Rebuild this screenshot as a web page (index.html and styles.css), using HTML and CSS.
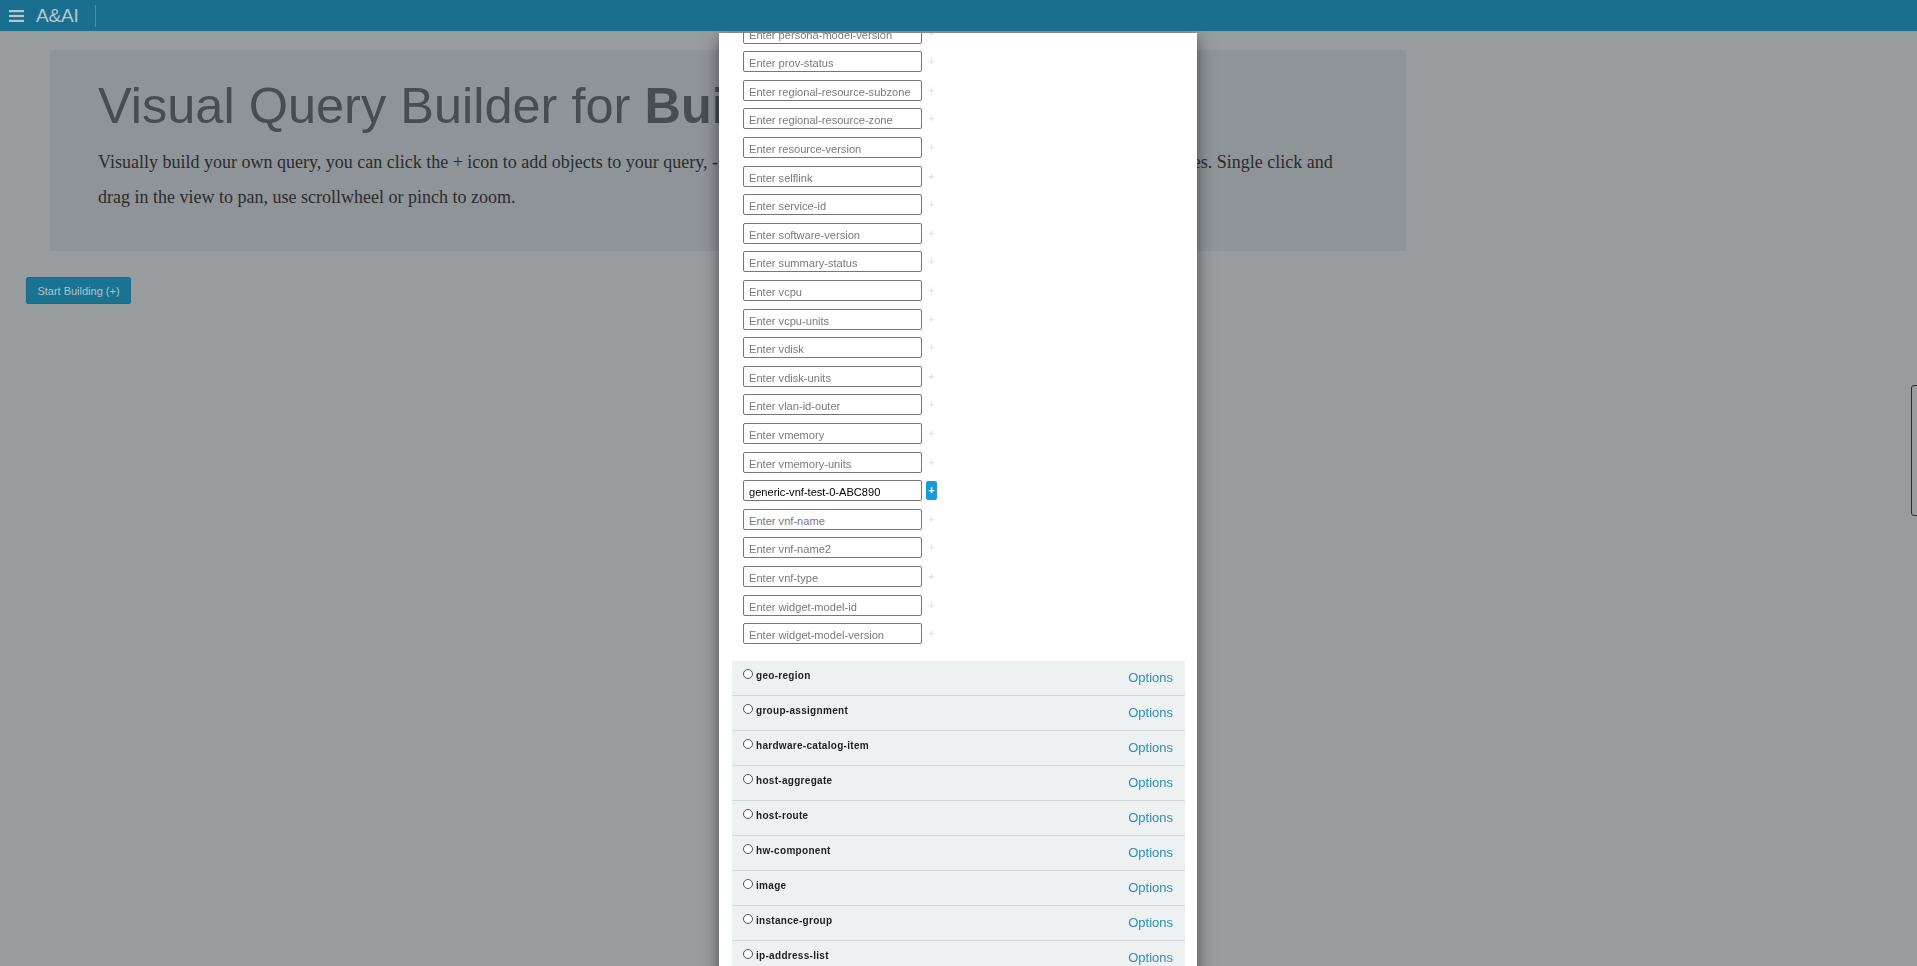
FILE: index.html
```html
<!DOCTYPE html>
<html lang="en">
<head>
<meta charset="utf-8">
<title>A&amp;AI - Visual Query Builder</title>
<link rel="stylesheet" href="styles.css">
</head>
<body>
<header class="topbar">
  <span class="menu-icon">
    <svg width="15" height="12" viewBox="0 0 15 12"><rect x="0" y="0" width="15" height="2.2" fill="#b7c7cd"/><rect x="0" y="4.9" width="15" height="2.2" fill="#b7c7cd"/><rect x="0" y="9.8" width="15" height="2.2" fill="#b7c7cd"/></svg>
  </span>
  <span class="brand">A&amp;AI</span>
  <span class="brand-sep"></span>
</header>

<main class="page">
  <section class="jumbotron">
    <h1 class="title">Visual Query Builder for <b>Building</b></h1>
    <p class="lead">Visually build your own query, you can click the + icon to add objects to your query, - icon to remove objects from your query, or the icon to set attributes. Single click and drag in the view to pan, use scrollwheel or pinch to zoom.</p>
  </section>
  <button class="start-btn" type="button">Start Building (+)</button>
</main>

<div class="side-tab"></div>

<div class="modal">
  <div class="modal-body">
    <div class="attr-list">
      <div class="attr-row"><input class="attr-input" placeholder="Enter persona-model-version"><span class="add-btn">+</span></div>
      <div class="attr-row"><input class="attr-input" placeholder="Enter prov-status"><span class="add-btn">+</span></div>
      <div class="attr-row"><input class="attr-input" placeholder="Enter regional-resource-subzone"><span class="add-btn">+</span></div>
      <div class="attr-row"><input class="attr-input" placeholder="Enter regional-resource-zone"><span class="add-btn">+</span></div>
      <div class="attr-row"><input class="attr-input" placeholder="Enter resource-version"><span class="add-btn">+</span></div>
      <div class="attr-row"><input class="attr-input" placeholder="Enter selflink"><span class="add-btn">+</span></div>
      <div class="attr-row"><input class="attr-input" placeholder="Enter service-id"><span class="add-btn">+</span></div>
      <div class="attr-row"><input class="attr-input" placeholder="Enter software-version"><span class="add-btn">+</span></div>
      <div class="attr-row"><input class="attr-input" placeholder="Enter summary-status"><span class="add-btn">+</span></div>
      <div class="attr-row"><input class="attr-input" placeholder="Enter vcpu"><span class="add-btn">+</span></div>
      <div class="attr-row"><input class="attr-input" placeholder="Enter vcpu-units"><span class="add-btn">+</span></div>
      <div class="attr-row"><input class="attr-input" placeholder="Enter vdisk"><span class="add-btn">+</span></div>
      <div class="attr-row"><input class="attr-input" placeholder="Enter vdisk-units"><span class="add-btn">+</span></div>
      <div class="attr-row"><input class="attr-input" placeholder="Enter vlan-id-outer"><span class="add-btn">+</span></div>
      <div class="attr-row"><input class="attr-input" placeholder="Enter vmemory"><span class="add-btn">+</span></div>
      <div class="attr-row"><input class="attr-input" placeholder="Enter vmemory-units"><span class="add-btn">+</span></div>
      <div class="attr-row"><input class="attr-input" placeholder="Enter vnf-id" value="generic-vnf-test-0-ABC890"><span class="add-btn active">+</span></div>
      <div class="attr-row"><input class="attr-input" placeholder="Enter vnf-name"><span class="add-btn">+</span></div>
      <div class="attr-row"><input class="attr-input" placeholder="Enter vnf-name2"><span class="add-btn">+</span></div>
      <div class="attr-row"><input class="attr-input" placeholder="Enter vnf-type"><span class="add-btn">+</span></div>
      <div class="attr-row"><input class="attr-input" placeholder="Enter widget-model-id"><span class="add-btn">+</span></div>
      <div class="attr-row"><input class="attr-input" placeholder="Enter widget-model-version"><span class="add-btn">+</span></div>
    </div>

    <ul class="obj-list">
      <li class="obj-row"><span class="obj-name"><span class="radio"></span>geo-region</span><a class="options">Options</a></li>
      <li class="obj-row"><span class="obj-name"><span class="radio"></span>group-assignment</span><a class="options">Options</a></li>
      <li class="obj-row"><span class="obj-name"><span class="radio"></span>hardware-catalog-item</span><a class="options">Options</a></li>
      <li class="obj-row"><span class="obj-name"><span class="radio"></span>host-aggregate</span><a class="options">Options</a></li>
      <li class="obj-row"><span class="obj-name"><span class="radio"></span>host-route</span><a class="options">Options</a></li>
      <li class="obj-row"><span class="obj-name"><span class="radio"></span>hw-component</span><a class="options">Options</a></li>
      <li class="obj-row"><span class="obj-name"><span class="radio"></span>image</span><a class="options">Options</a></li>
      <li class="obj-row"><span class="obj-name"><span class="radio"></span>instance-group</span><a class="options">Options</a></li>
      <li class="obj-row"><span class="obj-name"><span class="radio"></span>ip-address-list</span><a class="options">Options</a></li>
      <li class="obj-row"><span class="obj-name"><span class="radio"></span>l3-network</span><a class="options">Options</a></li>
    </ul>
  </div>
</div>
</body>
</html>
```

FILE: styles.css
```css
html, body {
  margin: 0;
  padding: 0;
  height: 100%;
  overflow: hidden;
}
body {
  background: #999c9f;
  font-family: "Liberation Sans", Arial, sans-serif;
}

.topbar {
  position: relative;
  z-index: 20;
  height: 31px;
  background: #1b6f8e;
  display: flex;
  align-items: center;
  box-sizing: border-box;
}
.menu-icon {
  display: flex;
  margin-left: 9px;
  margin-top: 1px;
}
.brand {
  margin-left: 12px;
  font-size: 19px;
  line-height: 22px;
  color: #b7c7cd;
  letter-spacing: -0.2px;
}
.brand-sep {
  margin-left: 16px;
  width: 1px;
  height: 22px;
  background: #4f8ea6;
  margin-top: 1px;
}

.page {
  padding-top: 19px;
}
.jumbotron {
  margin: 0 511px 0 50px;
  height: 201px;
  box-sizing: border-box;
  padding: 26px 48px 0 48px;
  background: #8f9498;
}
.title {
  margin: 0 0 9px 0;
  font-family: "Liberation Sans", Arial, sans-serif;
  font-size: 50.5px;
  line-height: 60px;
  font-weight: normal;
  color: #474d52;
  white-space: nowrap;
}
.title b {
  font-weight: bold;
}
.lead {
  margin: 0;
  font-family: "Liberation Serif", "Times New Roman", serif;
  font-size: 18px;
  line-height: 34.5px;
  color: #2a2c2e;
}

.start-btn {
  display: block;
  margin: 26px 0 0 26px;
  width: 105px;
  height: 27px;
  padding: 0;
  border: 1px solid #186a87;
  border-radius: 2px;
  background: #1a7391;
  color: #aec3cb;
  font-family: "Liberation Sans", Arial, sans-serif;
  font-size: 11px;
}

.side-tab {
  position: fixed;
  top: 385px;
  left: 1911px;
  width: 14px;
  height: 129px;
  border: 1px solid #2b2d2f;
  border-radius: 3px;
}

.modal {
  position: fixed;
  z-index: 10;
  left: 719px;
  top: 33px;
  width: 478px;
  bottom: -40px;
  background: #ffffff;
  box-shadow: 0 5px 15px rgba(0, 0, 0, 0.5);
  overflow: hidden;
}
.modal-body {
  padding: 0 12px 0 13px;
}
.attr-list {
  margin-top: -10.3px;
  padding-left: 11px;
}
.attr-row {
  display: flex;
  align-items: center;
  height: 21px;
  margin-bottom: 7.6px;
}
.attr-input {
  box-sizing: border-box;
  width: 179px;
  height: 21px;
  margin: 0;
  padding: 3px 5px 0 5px;
  border: 1px solid #767676;
  border-radius: 2px;
  font-family: "Liberation Sans", Arial, sans-serif;
  font-size: 11.1px;
  color: #000;
  background: #fff;
  outline: none;
}
.attr-input::placeholder {
  color: #7a7a7a;
}
.add-btn {
  margin-left: 4px;
  width: 11px;
  height: 19px;
  border-radius: 2px;
  display: flex;
  align-items: center;
  justify-content: center;
  font-size: 10px;
  font-weight: bold;
  color: #e4e4e4;
}
.add-btn.active {
  background: #1a9bd9;
  color: #ffffff;
}

.obj-list {
  list-style: none;
  margin: 16.7px 0 0 0;
  padding: 0;
}
.obj-row {
  display: flex;
  justify-content: space-between;
  align-items: flex-start;
  height: 34px;
  box-sizing: content-box;
  padding: 0 12px 0 11px;
  background: #eef1f2;
  border-bottom: 1px solid #d3d8da;
}
.obj-name {
  display: flex;
  align-items: center;
  margin-top: 9px;
  font-size: 10px;
  line-height: 11px;
  font-weight: bold;
  letter-spacing: 0.3px;
  color: #1e1e1e;
}
.radio {
  box-sizing: border-box;
  width: 10px;
  height: 10px;
  margin-right: 3px;
  margin-top: -2px;
  border: 1px solid #505050;
  border-radius: 50%;
  background: #fff;
}
.options {
  margin-top: 9px;
  font-size: 13px;
  line-height: 15px;
  color: #2b8fb0;
  cursor: pointer;
}
```
